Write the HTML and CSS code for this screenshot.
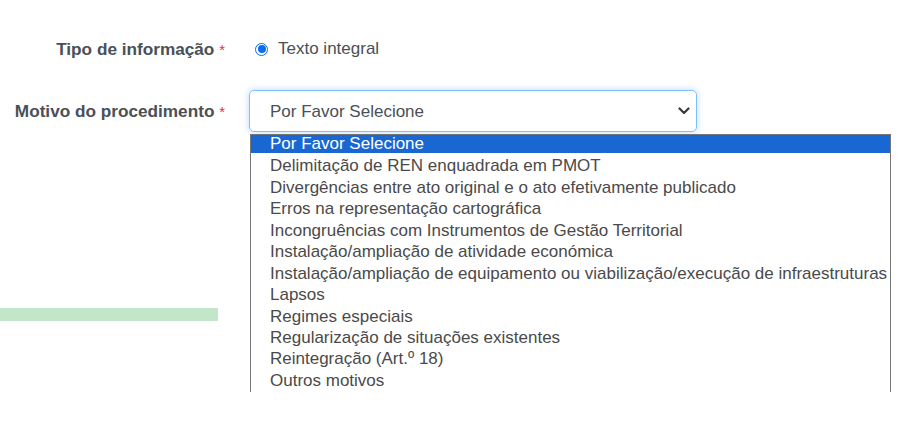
FILE: index.html
```html
<!DOCTYPE html>
<html lang="pt">
<head>
<meta charset="utf-8">
<title>Formulário</title>
<link rel="stylesheet" href="styles.css">
</head>
<body>
<div class="form">
  <div class="row row-tipo">
    <div class="label">Tipo de informação <span class="req">*</span></div>
    <div class="control">
      <label class="radio"><span class="radio-dot"></span>Texto integral</label>
    </div>
  </div>
  <div class="row row-motivo">
    <div class="label">Motivo do procedimento <span class="req">*</span></div>
    <div class="control">
      <div class="select">
        <span class="select-text">Por Favor Selecione</span>
        <svg class="chev" width="12" height="8" viewBox="0 0 12 8"><path d="M1.5 1.5 L6 6 L10.5 1.5" fill="none" stroke="#343a40" stroke-width="2.2" stroke-linecap="round" stroke-linejoin="round"/></svg>
      </div>
      <ul class="dropdown">
        <li class="selected">Por Favor Selecione</li>
        <li>Delimitação de REN enquadrada em PMOT</li>
        <li>Divergências entre ato original e o ato efetivamente publicado</li>
        <li>Erros na representação cartográfica</li>
        <li>Incongruências com Instrumentos de Gestão Territorial</li>
        <li>Instalação/ampliação de atividade económica</li>
        <li>Instalação/ampliação de equipamento ou viabilização/execução de infraestruturas</li>
        <li>Lapsos</li>
        <li>Regimes especiais</li>
        <li>Regularização de situações existentes</li>
        <li>Reintegração (Art.º 18)</li>
        <li>Outros motivos</li>
      </ul>
    </div>
  </div>
  <div class="progress"></div>
</div>
</body>
</html>
```

FILE: styles.css
```css
html, body {
  margin: 0;
  padding: 0;
  background: #fff;
}
body {
  font-family: "Liberation Sans", Arial, sans-serif;
  color: #495057;
  width: 906px;
  height: 442px;
  overflow: hidden;
}
.form {
  padding-top: 37px;
}
.row {
  display: grid;
  grid-template-columns: 225px 1fr;
  column-gap: 24px;
  align-items: center;
}
.label {
  text-align: right;
  font-weight: bold;
  font-size: 17.2px;
  color: #495057;
  white-space: nowrap;
}
.req {
  color: #e3342f;
  font-weight: normal;
  font-size: 15px;
}
.row-tipo {
  height: 24px;
}
.row-motivo {
  margin-top: 29px;
  height: 42px;
}
.control {
  position: relative;
}
.radio {
  display: flex;
  align-items: center;
  font-size: 17px;
  color: #495057;
  margin-left: 6px;
}
.radio-dot {
  width: 11px;
  height: 11px;
  border: 1.5px solid #0b6ee8;
  border-radius: 50%;
  box-sizing: content-box;
  margin-right: 10px;
  position: relative;
}
.radio-dot::after {
  content: "";
  position: absolute;
  left: 1.5px;
  top: 1.5px;
  width: 8px;
  height: 8px;
  border-radius: 50%;
  background: #0b6ee8;
}
.select {
  width: 448px;
  height: 42px;
  box-sizing: border-box;
  border: 1px solid #80bdff;
  border-radius: 5px;
  box-shadow: 0 0 6px 1px rgba(0, 123, 255, 0.22);
  display: flex;
  align-items: center;
  justify-content: space-between;
  padding: 2px 6px 0 20px;
  font-size: 17px;
  color: #495057;
}
.chev {
  display: block;
  margin-top: -2px;
}
.dropdown {
  position: absolute;
  left: 1px;
  top: 44px;
  margin: 0;
  padding: 0;
  list-style: none;
  width: 641px;
  height: 258px;
  box-sizing: border-box;
  border: 1px solid #767676;
  border-bottom: none;
  background: #fff;
  z-index: 2;
}
.dropdown li {
  height: 21.45px;
  line-height: 20px;
  padding-left: 19px;
  font-size: 17px;
  color: #4a4a4a;
  white-space: nowrap;
}
.dropdown li.selected {
  background: #1967d2;
  color: #fff;
  height: 18px;
  line-height: 18px;
  margin-bottom: 3.45px;
}
.progress {
  margin-top: 176px;
  width: 218px;
  height: 13px;
  background: #c3e6cb;
}
```
